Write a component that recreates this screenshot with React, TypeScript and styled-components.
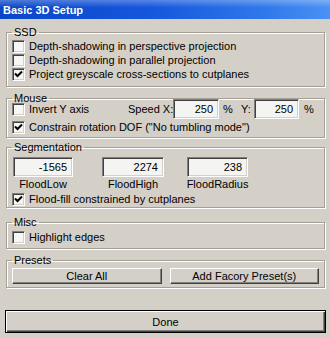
import React, { FC } from 'react'
import styled, { createGlobalStyle } from 'styled-components'

const GlobalStyle = createGlobalStyle`
  html, body {
    margin: 0;
    padding: 0;
    background: #d4d0c8;
  }
  body {
    font-family: "Liberation Sans", Arial, sans-serif;
    font-size: 11px;
    color: #000;
  }
`

const Window = styled.div`
  width: 330px;
  height: 338px;
  background: #d4d0c8;
  display: flex;
  flex-direction: column;
  overflow: hidden;
`

const TitleBar = styled.div`
  height: 19px;
  display: flex;
  align-items: center;
  padding-left: 3px;
  color: #fff;
  font-weight: bold;
  font-size: 11px;
  background:
    linear-gradient(to bottom, rgba(255, 255, 255, 0.28), rgba(255, 255, 255, 0) 40%),
    linear-gradient(to right, #0a46c8 0%, #1556dc 45%, #2f78ea 80%, #4a92f4 100%);
`

const Content = styled.div`
  padding: 7px 0 0 5px;
  display: flex;
  flex-direction: column;
`

const Group = styled.fieldset<{ $top: number; $bottom: number }>`
  width: 319px;
  box-sizing: border-box;
  min-width: 0;
  margin: ${p => p.$top}px 0 0 1px;
  padding: 0 5px ${p => p.$bottom}px 5px;
  border: 1px solid #a4a098;
  box-shadow: inset 1px 1px 0 #fff, 1px 1px 0 #fff;
`

const Legend = styled.legend`
  padding: 0 2px;
  margin: 0;
  line-height: 13px;
  height: 13px;
`

const Row = styled.div<{ $mt?: number }>`
  height: 14px;
  display: flex;
  align-items: center;
  margin-top: ${p => p.$mt || 0}px;
`

const CheckLabel = styled.label<{ $w?: number }>`
  display: flex;
  align-items: center;
  gap: 4px;
  white-space: nowrap;
  ${p => (p.$w ? `width: ${p.$w}px; flex: none;` : '')}
`

const Box = styled.span`
  width: 13px;
  height: 13px;
  box-sizing: border-box;
  flex: none;
  background: #f6f6f4;
  border: 1px solid;
  border-color: #808080 #fff #fff #808080;
  box-shadow: inset 1px 1px 0 #404040, inset -1px -1px 0 #d4d0c8;
  display: flex;
  align-items: center;
  justify-content: center;
`

const SpeedRow = styled.div`
  height: 20px;
  margin-top: -6px;
  display: flex;
  align-items: center;
`

const Text = styled.span<{ $w?: number; $pl?: number }>`
  white-space: nowrap;
  flex: none;
  ${p => (p.$w ? `width: ${p.$w}px;` : '')}
  padding-left: ${p => p.$pl || 0}px;
  box-sizing: border-box;
`

const NumBox = styled.div<{ $w: number }>`
  width: ${p => p.$w}px;
  height: 20px;
  box-sizing: border-box;
  flex: none;
  background: #f4f4f2;
  border: 1px solid;
  border-color: #808080 #fff #fff #808080;
  box-shadow: inset 1px 1px 0 #404040, inset -1px -1px 0 #d4d0c8;
  display: flex;
  align-items: center;
  justify-content: flex-end;
  padding-right: 5px;
`

const FieldGrid = styled.div`
  display: grid;
  grid-template-columns: 89px 85px 61px;
  margin: 3px 0 0 1px;
`

const Field = styled.div<{ $w: number }>`
  width: ${p => p.$w}px;
  display: flex;
  flex-direction: column;
  align-items: center;
`

const FieldCaption = styled.div`
  height: 13px;
  line-height: 13px;
  margin-top: 1px;
`

const ButtonRow = styled.div`
  display: flex;
  gap: 8px;
  margin-top: 1px;
`

const PresetButton = styled.button`
  flex: 1;
  height: 16px;
  padding: 0;
  font: inherit;
  color: #000;
  background: #d4d0c8;
  border: 1px solid;
  border-color: #fff #404040 #404040 #fff;
  box-shadow: inset -1px -1px 0 #808080;
`

const DoneButton = styled.button`
  width: 321px;
  height: 23px;
  margin-top: 22px;
  padding: 0;
  font: inherit;
  color: #000;
  background: #d4d0c8;
  border: 1px solid #000;
  box-shadow: inset 1px 1px 0 #fff, inset -1px -1px 0 #404040, inset -2px -2px 0 #808080;
`

const Check: FC<{ label: string; checked?: boolean; width?: number }> = ({ label, checked, width }) => (
  <CheckLabel $w={width}>
    <Box>
      {checked && (
        <svg width="9" height="9" viewBox="0 0 9 9">
          <path d="M1 3.5 L3.5 6 L8 1.5" stroke="#000" strokeWidth="2" fill="none" />
        </svg>
      )}
    </Box>
    {label}
  </CheckLabel>
)

const App: FC = () => {
  return (
    <Window>
      <GlobalStyle />
      <TitleBar>Basic 3D Setup</TitleBar>
      <Content>
        <Group $top={0} $bottom={5}>
          <Legend>SSD</Legend>
          <Row><Check label="Depth-shadowing in perspective projection" /></Row>
          <Row><Check label="Depth-shadowing in parallel projection" /></Row>
          <Row><Check label="Project greyscale cross-sections to cutplanes" checked /></Row>
        </Group>

        <Group $top={5} $bottom={3}>
          <Legend>Mouse</Legend>
          <SpeedRow>
            <Check label="Invert Y axis" width={116} />
            <Text $w={45}>Speed X:</Text>
            <NumBox $w={46}>250</NumBox>
            <Text $w={22} $pl={4}>%</Text>
            <Text $w={13}>Y:</Text>
            <NumBox $w={45}>250</NumBox>
            <Text $pl={5}>%</Text>
          </SpeedRow>
          <Row $mt={1}><Check label={'Constrain rotation DOF ("No tumbling mode")'} checked /></Row>
        </Group>

        <Group $top={3} $bottom={1}>
          <Legend>Segmentation</Legend>
          <FieldGrid>
            <Field $w={60}>
              <NumBox $w={60}>-1565</NumBox>
              <FieldCaption>FloodLow</FieldCaption>
            </Field>
            <Field $w={62}>
              <NumBox $w={62}>2274</NumBox>
              <FieldCaption>FloodHigh</FieldCaption>
            </Field>
            <Field $w={61}>
              <NumBox $w={61}>238</NumBox>
              <FieldCaption>FloodRadius</FieldCaption>
            </Field>
          </FieldGrid>
          <Row $mt={1}><Check label="Flood-fill constrained by cutplanes" checked /></Row>
        </Group>

        <Group $top={8} $bottom={4}>
          <Legend>Misc</Legend>
          <Row $mt={1}><Check label="Highlight edges" /></Row>
        </Group>

        <Group $top={5} $bottom={3}>
          <Legend>Presets</Legend>
          <ButtonRow>
            <PresetButton>Clear All</PresetButton>
            <PresetButton>Add Facory Preset(s)</PresetButton>
          </ButtonRow>
        </Group>

        <DoneButton>Done</DoneButton>
      </Content>
    </Window>
  )
}

export default App
